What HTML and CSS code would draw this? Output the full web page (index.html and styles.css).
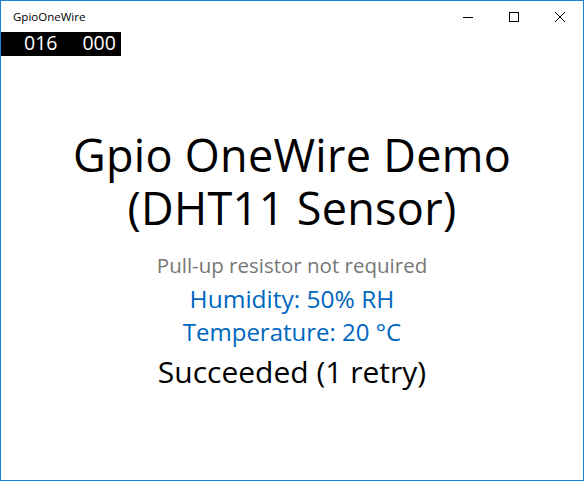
FILE: index.html
```html
<!DOCTYPE html>
<html>
<head>
<meta charset="utf-8">
<link rel="stylesheet" href="styles.css">
</head>
<body>
<div class="window">
  <div class="titlebar">
    <span class="app-title">GpioOneWire</span>
    <div class="controls">
      <span class="ctl"><svg width="10" height="10" viewBox="0 0 10 10"><path d="M0 5.5H10" stroke="#000" stroke-width="1"/></svg></span>
      <span class="ctl"><svg width="10" height="10" viewBox="0 0 10 10"><rect x="0.5" y="0.5" width="9" height="9" fill="none" stroke="#000" stroke-width="1"/></svg></span>
      <span class="ctl"><svg width="10" height="10" viewBox="0 0 10 10"><path d="M0 0L10 10M10 0L0 10" stroke="#000" stroke-width="1"/></svg></span>
    </div>
  </div>
  <div class="counters">
    <span>016</span>
    <span>000</span>
  </div>
  <div class="content">
    <div class="heading">Gpio OneWire Demo</div>
    <div class="heading">(DHT11 Sensor)</div>
    <div class="note">Pull-up resistor not required</div>
    <div class="reading humidity">Humidity: 50% RH</div>
    <div class="reading">Temperature: 20 °C</div>
    <div class="status">Succeeded (1 retry)</div>
  </div>
</div>
</body>
</html>
```
FILE: styles.css
```css
html, body {
  margin: 0;
  padding: 0;
  background: #fff;
}
body {
  font-family: "Open Sans", "Noto Sans", sans-serif;
}
.window {
  width: 584px;
  height: 481px;
  box-sizing: border-box;
  border: 1px solid #1883d7;
  display: flex;
  flex-direction: column;
}
.titlebar {
  height: 31px;
  display: flex;
  align-items: center;
  justify-content: space-between;
}
.app-title {
  font-size: 11.5px;
  padding-left: 12px;
  color: #000;
}
.controls {
  display: flex;
  height: 100%;
}
.ctl {
  width: 46px;
  display: flex;
  align-items: center;
  justify-content: center;
}
.counters {
  width: 120px;
  height: 24px;
  background: #000;
  color: #fff;
  display: flex;
  align-items: flex-start;
  gap: 25px;
  padding-left: 23px;
  box-sizing: border-box;
  font-size: 19.5px;
  line-height: 21px;
}
.content {
  display: flex;
  flex-direction: column;
  align-items: center;
  text-align: center;
  margin-top: 72px;
}
.heading {
  font-size: 45px;
  letter-spacing: 0.3px;
  line-height: 53px;
  height: 53px;
  color: #000;
}
.note {
  font-size: 20.5px;
  line-height: 28px;
  margin-top: 17px;
  color: #777;
}
.reading {
  font-size: 24px;
  line-height: 33px;
  color: #0067c0;
}
.humidity {
  font-size: 24.5px;
  margin-top: 3px;
}
.status {
  font-size: 30px;
  line-height: 40px;
  margin-top: 4px;
  color: #000;
}
```
